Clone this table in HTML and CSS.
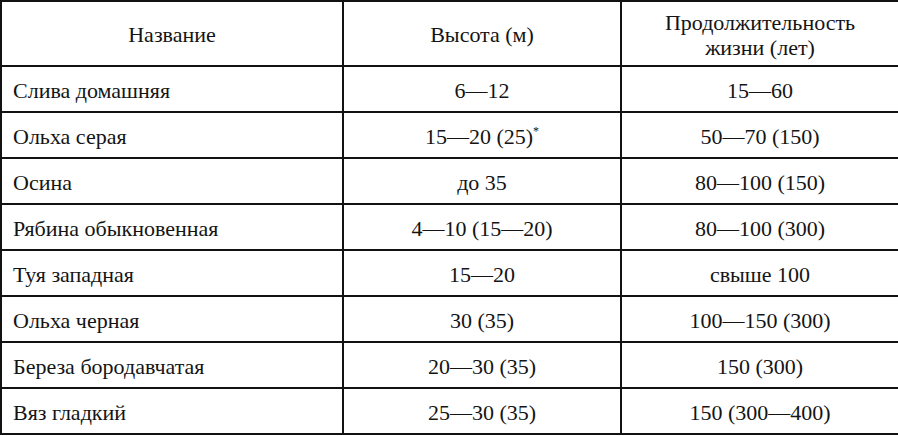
FILE: index.html
```html
<!DOCTYPE html>
<html lang="ru">
<head>
<meta charset="utf-8">
<link rel="stylesheet" href="styles.css">
</head>
<body>
<table class="trees">
  <colgroup>
    <col class="c-name">
    <col class="c-height">
    <col class="c-life">
  </colgroup>
  <thead>
    <tr>
      <th>Название</th>
      <th>Высота (м)</th>
      <th>Продолжительность<br>жизни (лет)</th>
    </tr>
  </thead>
  <tbody>
    <tr><td>Слива домашняя</td><td>6—12</td><td>15—60</td></tr>
    <tr><td>Ольха серая</td><td>15—20 (25)<sup>*</sup></td><td>50—70 (150)</td></tr>
    <tr><td>Осина</td><td>до 35</td><td>80—100 (150)</td></tr>
    <tr><td>Рябина обыкновенная</td><td>4—10 (15—20)</td><td>80—100 (300)</td></tr>
    <tr><td>Туя западная</td><td>15—20</td><td>свыше 100</td></tr>
    <tr><td>Ольха черная</td><td>30 (35)</td><td>100—150 (300)</td></tr>
    <tr><td>Береза бородавчатая</td><td>20—30 (35)</td><td>150 (300)</td></tr>
    <tr><td>Вяз гладкий</td><td>25—30 (35)</td><td>150 (300—400)</td></tr>
  </tbody>
</table>
</body>
</html>
```
FILE: styles.css
```css
html, body {
  margin: 0;
  padding: 0;
  background: #ffffff;
}
body {
  font-family: "Liberation Serif", "DejaVu Serif", serif;
  color: #141414;
}
.trees {
  border-collapse: collapse;
  width: 898px;
  table-layout: fixed;
  font-family: "Liberation Serif", "DejaVu Serif", serif;
  font-size: 22px;
}
.c-name { width: 342px; }
.c-height { width: 278px; }
.c-life { width: 278px; }
.trees th,
.trees td {
  font-family: "Liberation Serif", "DejaVu Serif", serif;
  border: 2px solid #121212;
  padding: 0;
  vertical-align: middle;
}
.trees th {
  font-weight: normal;
  text-align: center;
  height: 61px;
  padding-top: 2px;
  line-height: 25px;
}
.trees td {
  height: 41px;
  padding-top: 3px;
  text-align: center;
  line-height: 24px;
}
.trees td:first-child {
  text-align: left;
  padding-left: 11px;
}
.trees sup {
  font-size: 12px;
  vertical-align: 9px;
  line-height: 0;
}
```
